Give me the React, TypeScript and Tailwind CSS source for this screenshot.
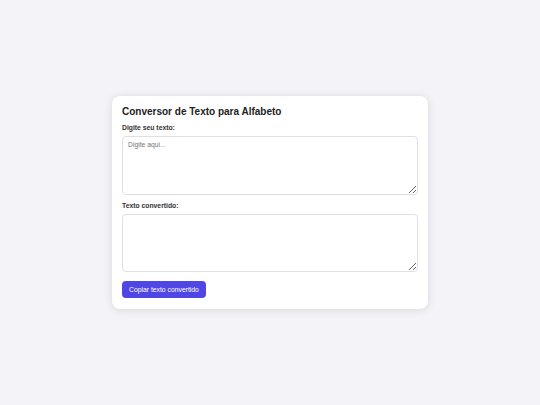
export default function App() {
  return (
    <div
      className="min-h-screen w-full flex items-center justify-center bg-[#f3f3f8]"
      style={{ fontFamily: '"Liberation Sans", Arial, sans-serif' }}
    >
      <div className="w-[316px] bg-white rounded-[8px] p-[10px] shadow-[0_1px_8px_rgba(0,0,0,0.12)]">
        <h1 className="text-[10px] leading-[12px] font-bold text-[#222] mb-[5px]">
          Conversor de Texto para Alfabeto
        </h1>
        <label className="block text-[6.8px] leading-[9px] font-bold text-[#333] mb-[4px]">
          Digite seu texto:
        </label>
        <textarea
          placeholder="Digite aqui..."
          className="block w-full h-[59px] rounded-[4px] border border-[#e0e0e0] px-[5px] pt-[3px] pb-[4px] text-[6.8px] leading-[9px] text-[#333] placeholder:text-[#777] outline-none"
        />
        <label className="block mt-[6px] text-[6.8px] leading-[9px] font-bold text-[#333] mb-[4px]">
          Texto convertido:
        </label>
        <textarea
          readOnly
          className="block w-full h-[58px] rounded-[4px] border border-[#e0e0e0] px-[5px] pt-[3px] pb-[4px] text-[6.8px] leading-[9px] outline-none"
        />
        <button className="mt-[9px] h-[17px] px-[7px] rounded-[4px] bg-[#4f46e5] text-white text-[6.8px] leading-[9px]">
          Copiar texto convertido
        </button>
      </div>
    </div>
  );
}
